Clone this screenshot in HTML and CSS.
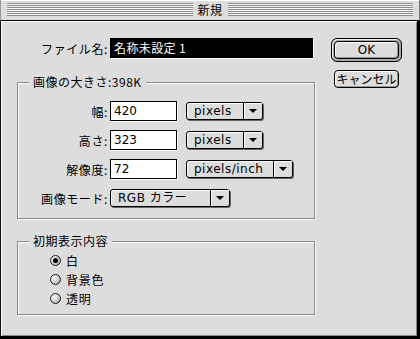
FILE: index.html
```html
<!DOCTYPE html>
<html lang="ja">
<head>
  <meta charset="utf-8">
  <title>新規</title>
  <link rel="stylesheet" href="styles.css">
</head>
<body>
  <div class="window">
    <div class="titlebar">
      <span class="stripes"></span>
      <span class="title">新規</span>
      <span class="stripes"></span>
    </div>
    <div class="content">
      <div class="main">
        <div class="file_row">
          <span class="file_label">ファイル名:</span>
          <div class="name_field">名称未設定 1</div>
        </div>

        <div class="group size_group">
          <div class="group_title">画像の大きさ:398K</div>
          <div class="rows">
            <div class="row">
              <span class="row_label">幅:</span>
              <div class="field">420</div>
              <div class="popup popup_unit"><span class="popup_text">pixels</span><span class="popup_arrow"></span></div>
            </div>
            <div class="row">
              <span class="row_label">高さ:</span>
              <div class="field">323</div>
              <div class="popup popup_unit"><span class="popup_text">pixels</span><span class="popup_arrow"></span></div>
            </div>
            <div class="row">
              <span class="row_label">解像度:</span>
              <div class="field">72</div>
              <div class="popup popup_res"><span class="popup_text">pixels/inch</span><span class="popup_arrow"></span></div>
            </div>
            <div class="row">
              <span class="row_label">画像モード:</span>
              <div class="popup popup_mode"><span class="popup_text">RGB カラー</span><span class="popup_arrow"></span></div>
            </div>
          </div>
        </div>

        <div class="group fill_group">
          <div class="group_title">初期表示内容</div>
          <div class="radios">
            <div class="radio_row"><span class="radio checked"></span>白</div>
            <div class="radio_row"><span class="radio"></span>背景色</div>
            <div class="radio_row"><span class="radio"></span>透明</div>
          </div>
        </div>
      </div>

      <div class="buttons">
        <div class="default_ring"><div class="button">OK</div></div>
        <div class="button cancel">キャンセル</div>
      </div>
    </div>
  </div>
</body>
</html>
```

FILE: styles.css
```css
*, *:before, *:after {
  box-sizing: border-box;
}
html, body {
  margin: 0;
  padding: 0;
  background: #dddddd;
}
body {
  font-family: "Noto Sans CJK JP", sans-serif;
  font-size: 12px;
  color: #000;
}

.window {
  width: 420px;
  height: 339px;
  display: flex;
  flex-direction: column;
  background: #dddddd;
}

/* title bar */
.titlebar {
  height: 21px;
  display: flex;
  align-items: flex-start;
  padding: 3px 6px 0 6px;
  border-bottom: 1px solid #000;
  border-left: 1px solid #999;
  border-right: 1px solid #777;
  box-shadow: inset 0 1px 0 #fff;
  background: #dddddd;
}
.stripes {
  flex: 1;
  height: 13px;
  background: repeating-linear-gradient(to bottom, #8e8e8e 0 1px, #f2f2f2 1px 2px);
}
.title {
  height: 13px;
  line-height: 13px;
  padding: 0 5px;
  letter-spacing: 0.5px;
}

/* dialog body */
.content {
  flex: 1;
  display: flex;
  align-items: flex-start;
  padding: 17px 0 0 16px;
  border-left: 1px solid #111;
  border-right: 3px solid #000;
  border-bottom: 3px solid #000;
  box-shadow: inset 1px 1px 0 #fff, inset -1px -1px 0 #888;
}
.main {
  width: 298px;
}

.file_row {
  display: flex;
  align-items: center;
  height: 20px;
}
.file_label {
  width: 91px;
  margin-right: 2px;
  text-align: right;
  letter-spacing: 0.6px;
}
.name_field {
  flex: 1;
  height: 20px;
  margin-right: 2px;
  line-height: 18px;
  padding-left: 3px;
  border: 1px solid #000;
  background: #000;
  color: #fff;
  box-shadow: 1px 1px 0 #fff;
  letter-spacing: 0.4px;
}

/* group boxes */
.group {
  border: 1px solid #888;
  box-shadow: 1px 1px 0 #fff, inset 1px 1px 0 #fff;
}
.group_title {
  width: fit-content;
  margin: -9px 0 0 11px;
  padding: 0 4px;
  line-height: 16px;
  background: #dddddd;
  letter-spacing: 0.5px;
}
.size_group {
  margin-top: 24px;
  padding-bottom: 10px;
}
.fill_group {
  margin-top: 22px;
  padding-bottom: 6px;
}

.rows {
  display: flex;
  flex-direction: column;
  gap: 9px;
  padding-top: 11px;
}
.row {
  display: flex;
  align-items: center;
  height: 20px;
}
.row_label {
  width: 90px;
  margin-right: 2px;
  text-align: right;
  letter-spacing: 0.6px;
}
.field {
  width: 67px;
  height: 20px;
  margin-right: 9px;
  padding-left: 3px;
  line-height: 18px;
  border: 1px solid #000;
  background: #fff;
  font-family: "DejaVu Sans", "Noto Sans CJK JP", sans-serif;
  box-shadow: 1px 1px 0 #fff;
}

/* popup menus */
.popup {
  display: flex;
  height: 18px;
  border: 1px solid #000;
  border-radius: 3px;
  background: #dddddd;
  box-shadow: 1px 1px 0 #666, inset 1px 1px 0 #fff;
  font-family: "DejaVu Sans", "Noto Sans CJK JP", sans-serif;
  letter-spacing: 0.5px;
}
.popup_unit {
  width: 77px;
}
.popup_res {
  width: 107px;
}
.popup_mode {
  width: 120px;
}
.popup_text {
  flex: 1;
  padding-left: 7px;
  line-height: 16px;
  white-space: nowrap;
}
.popup_arrow {
  width: 19px;
  border-left: 1px solid #000;
  display: flex;
  align-items: center;
  justify-content: center;
  box-shadow: inset 1px 1px 0 #fff;
}
.popup_arrow:after {
  content: "";
  border-left: 4px solid transparent;
  border-right: 4px solid transparent;
  border-top: 4px solid #000;
}

/* radios */
.radios {
  padding: 2px 0 0 32px;
}
.radio_row {
  display: flex;
  align-items: center;
  height: 19px;
  letter-spacing: 0.8px;
}
.radio {
  width: 11px;
  height: 11px;
  margin-right: 5px;
  border: 1px solid #222;
  border-radius: 50%;
  background: radial-gradient(circle at 35% 35%, #fff 0, #d4d4d4 45%, #888 100%);
  display: flex;
  align-items: center;
  justify-content: center;
}
.radio.checked:after {
  content: "";
  width: 5px;
  height: 5px;
  border-radius: 50%;
  background: #000;
}

/* buttons */
.buttons {
  margin-left: 16px;
  width: 71px;
  display: flex;
  flex-direction: column;
  align-items: center;
}
.default_ring {
  width: 71px;
  height: 24px;
  padding: 2px;
  border: 1px solid #000;
  border-radius: 6px;
  background: #a8a8a8;
  box-shadow: inset 1px 1px 0 #eee;
}
.button {
  width: 65px;
  height: 18px;
  border: 1px solid #000;
  border-radius: 4px;
  background: #dddddd;
  box-shadow: inset 1px 1px 0 #fff, inset -1px -1px 0 #999;
  text-align: center;
  line-height: 16px;
  white-space: nowrap;
  font-family: "DejaVu Sans", "Noto Sans CJK JP", sans-serif;
}
.default_ring .button {
  width: 100%;
}
.cancel {
  margin-top: 8px;
  font-family: "Noto Sans CJK JP", sans-serif;
  letter-spacing: 0;
}
```
